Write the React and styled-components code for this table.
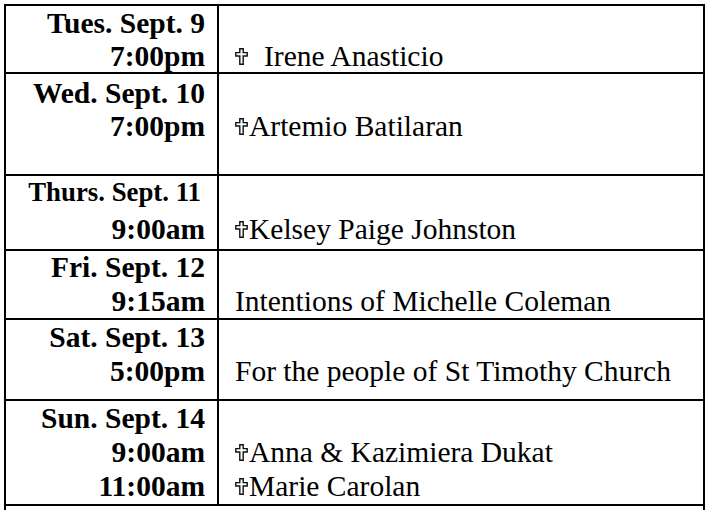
import React from "react";
import styled, { createGlobalStyle } from "styled-components";

const Global = createGlobalStyle`
  html, body { margin: 0; padding: 0; background: #fff; overflow: hidden; }
  body { width: 708px; height: 510px; }
`;

const Table = styled.div`
  margin: 4px 0 0 4px;
  width: 697px;
  border: 2px solid #000;
  border-bottom: none;
  font-family: "Liberation Serif", "Times New Roman", serif;
  color: #000;
`;

const Row = styled.div`
  display: grid;
  grid-template-columns: ${(p) => (p.$merged ? "1fr" : "213px 1fr")};
  height: ${(p) => p.$h}px;
  border-bottom: ${(p) => (p.$merged ? "none" : "2px solid #000")};
  box-sizing: content-box;
`;

const DateCell = styled.div`
  border-right: 2px solid #000;
  text-align: right;
  padding: ${(p) => p.$pt}px 12px 0 0;
  font-weight: bold;
  font-size: 29.5px;
  overflow: hidden;
`;

const IntentCell = styled.div`
  padding: ${(p) => p.$pt}px 0 0 16px;
  font-size: 29.5px;
  overflow: hidden;
`;

const Line = styled.div`
  height: ${(p) => p.$lh}px;
  line-height: ${(p) => p.$lh}px;
  margin-top: ${(p) => p.$mt || 0}px;
  white-space: nowrap;
  font-size: ${(p) => (p.$small ? "26.8px" : "29.5px")};
  padding-right: ${(p) => (p.$small ? 4 : 0)}px;
`;

const CrossSvg = styled.svg`
  display: inline-block;
  flex: none;
  width: 13px;
  min-width: 13px;
  height: 17px;
  margin-right: ${(p) => (p.$gap ? 16 : 1)}px;
  vertical-align: 1px;
`;

function Cross({ gap }) {
  return (
    <CrossSvg $gap={gap} width="13" height="17" viewBox="0 0 13 17">
      <path
        d="M4.8 0.8 H8.2 V4.6 H12.2 V8 H8.2 V16.2 H4.8 V8 H0.8 V4.6 H4.8 Z"
        fill="#fff"
        stroke="#111"
        strokeWidth="1.4"
        strokeLinejoin="miter"
      />
    </CrossSvg>
  );
}

const rows = [
  {
    h: 66, pt: 1, lh: 33,
    left: [{ t: "Tues. Sept. 9" }, { t: "7:00pm" }],
    right: [null, { cross: true, gap: true, t: "Irene Anasticio" }],
  },
  {
    h: 100, pt: 3, lh: 33,
    left: [{ t: "Wed. Sept. 10" }, { t: "7:00pm" }],
    right: [null, { cross: true, t: "Artemio Batilaran" }],
  },
  {
    h: 73, pt: 0, lh: 32, mt: 5,
    left: [{ t: "Thurs. Sept. 11", small: true }, { t: "9:00am" }],
    right: [null, { cross: true, t: "Kelsey Paige Johnston" }],
  },
  {
    h: 67, pt: 0, lh: 32, mt: 2,
    left: [{ t: "Fri. Sept. 12" }, { t: "9:15am" }],
    right: [null, { t: "Intentions of Michelle Coleman" }],
  },
  {
    h: 79, pt: 0, lh: 34,
    left: [{ t: "Sat. Sept. 13" }, { t: "5:00pm" }],
    right: [null, { t: "For the people of St Timothy Church" }],
  },
  {
    h: 103, pt: 0, lh: 34,
    left: [{ t: "Sun. Sept. 14" }, { t: "9:00am" }, { t: "11:00am" }],
    right: [
      null,
      { cross: true, t: "Anna & Kazimiera Dukat" },
      { cross: true, t: "Marie Carolan" },
    ],
  },
];

export default function App() {
  return (
    <>
      <Global />
      <Table>
        {rows.map((r, i) => (
          <Row key={i} $h={r.h}>
            <DateCell $pt={r.pt}>
              {r.left.map((l, j) => (
                <Line key={j} $lh={r.lh} $mt={j > 0 ? r.mt : 0} $small={l.small}>
                  {l.t}
                </Line>
              ))}
            </DateCell>
            <IntentCell $pt={r.pt}>
              {r.right.map((l, j) => (
                <Line key={j} $lh={r.lh} $mt={j > 0 ? r.mt : 0}>
                  {l && l.cross && <Cross gap={l.gap} />}
                  {l ? l.t : "\u00a0"}
                </Line>
              ))}
            </IntentCell>
          </Row>
        ))}
        <Row $h={40} $merged />
      </Table>
    </>
  );
}
